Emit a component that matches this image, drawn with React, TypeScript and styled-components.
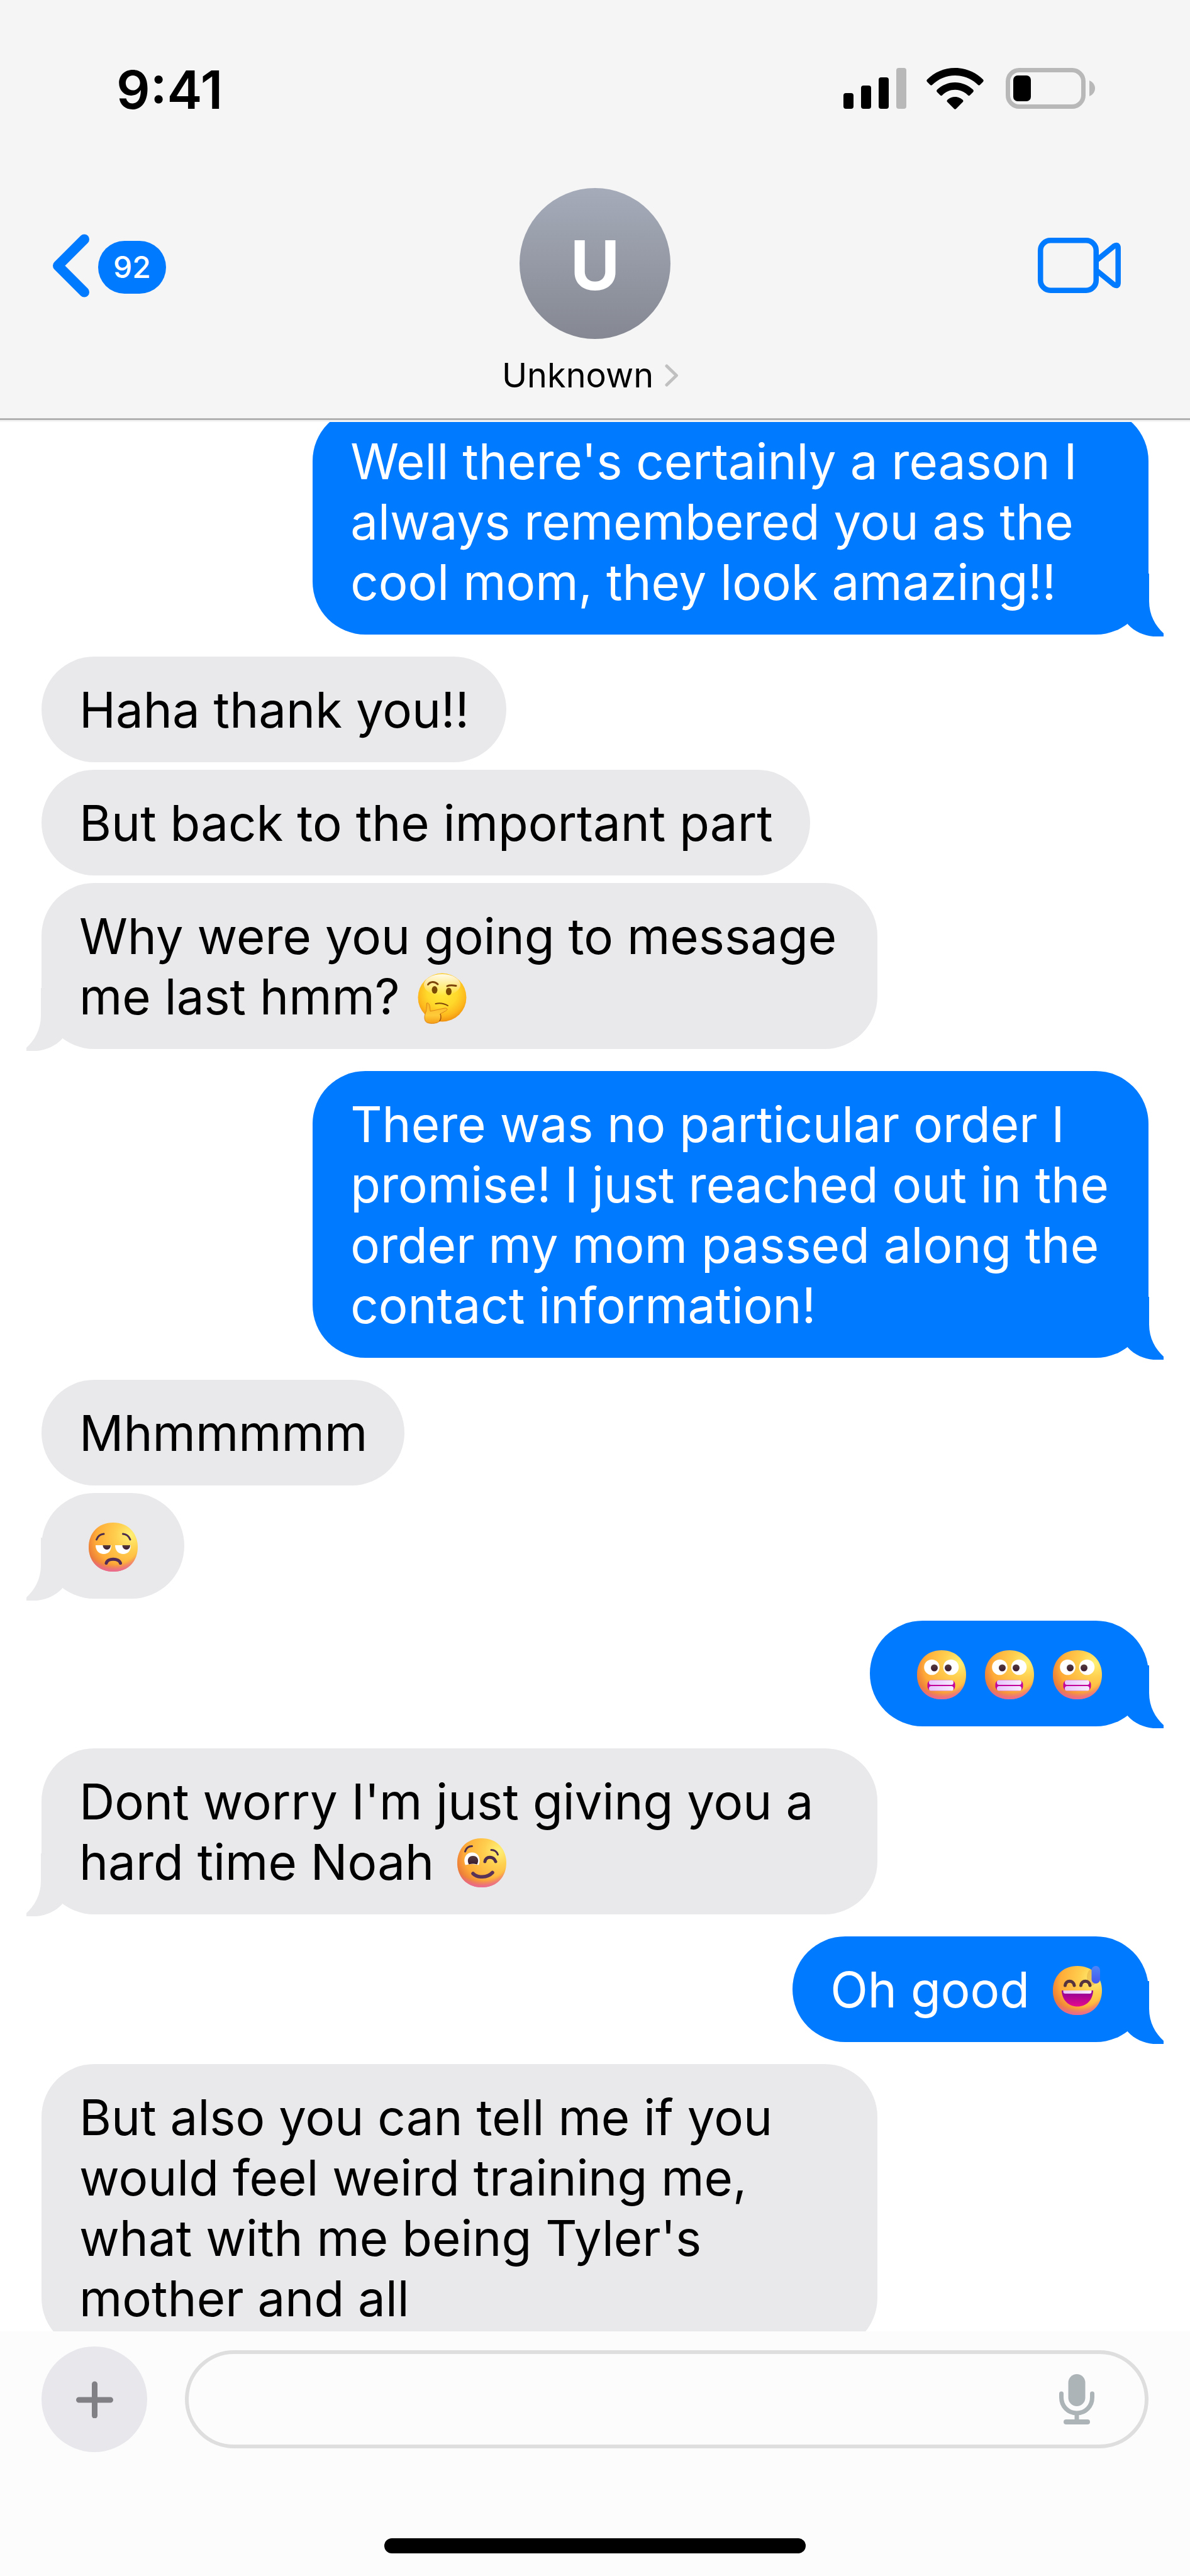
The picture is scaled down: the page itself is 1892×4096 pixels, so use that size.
import React from "react";
import styled, { createGlobalStyle } from "styled-components";

const BLUE = "#007aff";
const GRAY = "#e9e9eb";

const GlobalStyle = createGlobalStyle`
  *, *::before, *::after { box-sizing: border-box; }
  html, body { margin: 0; padding: 0; background: #ffffff; }
  body { font-family: Inter, "Liberation Sans", sans-serif; color: #000000; }
  button { border: 0; padding: 0; background: none; font: inherit; color: inherit; cursor: pointer; }
  svg { display: block; }
`;

const Phone = styled.div`
  display: flex;
  flex-direction: column;
  height: 100vh;
  overflow: hidden;
  background: #ffffff;
`;

/* ---------- header ---------- */

const Header = styled.header`
  flex: none;
  background: #f5f5f5;
  border-bottom: 3px solid #b1b1b1;
  padding-bottom: 36px;
`;

const StatusBar = styled.div`
  display: flex;
  justify-content: space-between;
  align-items: flex-start;
  padding: 108px 151px 0 185px;
`;

const Clock = styled.time`
  font-size: 84px;
  line-height: 70px;
  font-weight: 600;
`;

const StatusIcons = styled.div`
  display: flex;
  gap: 32px;
`;

const Nav = styled.nav`
  display: grid;
  grid-template-columns: 1fr auto 1fr;
  align-items: start;
  height: 330px;
  padding: 0 110px 0 82px;
  margin-top: 121px;
`;

const NavSide = styled.div<{ $end?: boolean }>`
  display: flex;
  align-items: center;
  justify-content: ${(p) => (p.$end ? "flex-end" : "flex-start")};
  height: 246px;
`;

const BackButton = styled.button`
  display: flex;
  align-items: center;
  gap: 14px;
`;

const Badge = styled.span`
  height: 84px;
  margin-top: 6px;
  padding: 0 24px;
  border-radius: 42px;
  background: ${BLUE};
  color: #ffffff;
  font-size: 48px;
  line-height: 84px;
  font-weight: 500;
`;

const Contact = styled.button`
  display: flex;
  flex-direction: column;
  align-items: center;
  gap: 26px;
  margin-left: 28px;
`;

const Avatar = styled.span`
  display: grid;
  place-items: center;
  width: 240px;
  height: 240px;
  padding-top: 6px;
  border-radius: 50%;
  background: linear-gradient(#a5abb9, #858892);
  color: #ffffff;
  font-size: 108px;
  line-height: 132px;
  font-weight: 700;
`;

const ContactName = styled.span`
  display: flex;
  align-items: center;
  gap: 18px;
  padding-right: 15px;
  font-size: 54px;
  line-height: 64px;
`;

/* ---------- conversation ---------- */

const Conversation = styled.main`
  flex: 1;
  min-height: 0;
  overflow: hidden;
  border-top: 3px solid #f5f5f5;
`;

const Thread = styled.ul`
  display: flex;
  flex-direction: column;
  list-style: none;
  margin: -22px 0 0;
  padding: 0 66px;
`;

const Bubble = styled.li<{ $mine: boolean; $first: boolean }>`
  position: relative;
  align-self: ${(p) => (p.$mine ? "flex-end" : "flex-start")};
  max-width: 75.5%;
  margin-top: ${(p) => (p.$first ? "35px" : "12px")};
  padding: 37px 59px 35px 60px;
  border-radius: 84px;
  background: ${(p) => (p.$mine ? BLUE : GRAY)};
  color: ${(p) => (p.$mine ? "#ffffff" : "#000000")};
  font-size: 78px;
  line-height: 96px;

  &:first-child { margin-top: 0; }
`;

const TailShape = styled.svg<{ $mine: boolean }>`
  position: absolute;
  bottom: -3px;
  ${(p) => (p.$mine ? "right: -24px;" : "left: -24px; transform: scaleX(-1);")}
  fill: ${(p) => (p.$mine ? BLUE : GRAY)};
`;

const EmojiImage = styled.svg<{ $tight?: boolean }>`
  display: inline-block;
  overflow: visible;
  margin: 0 ${(p) => (p.$tight ? "6px" : "15px")};
  vertical-align: -12px;
`;

/* ---------- composer ---------- */

const Composer = styled.footer`
  flex: none;
  padding: 24px 66px 36px;
  background: #fcfcfc;
`;

const ComposerRow = styled.form`
  display: flex;
  align-items: center;
  gap: 60px;
`;

const PlusButton = styled.button`
  display: grid;
  place-items: center;
  flex: none;
  width: 168px;
  height: 168px;
  border-radius: 50%;
  background: #e8e7ec;
`;

const Field = styled.div`
  display: flex;
  align-items: center;
  flex: 1;
  height: 156px;
  padding: 0 80px 0 54px;
  border: 6px solid #dedede;
  border-radius: 78px;
`;

const TextInput = styled.input`
  flex: 1;
  min-width: 0;
  border: 0;
  outline: 0;
  background: transparent;
  font: inherit;
  font-size: 78px;
  line-height: 96px;
`;

const HomeIndicator = styled.div`
  width: 670px;
  max-width: 60%;
  height: 24px;
  margin: 137px auto 0;
  border-radius: 12px;
  background: #000000;
`;

/* ---------- icons ---------- */

const SignalIcon = () => (
  <svg width="100" height="65" viewBox="0 0 100 65" aria-hidden="true">
    <rect x="0" y="40" width="16" height="25" rx="4" />
    <rect x="28" y="28" width="16" height="37" rx="4" />
    <rect x="56" y="15" width="16" height="50" rx="4" />
    <rect x="84" y="0" width="16" height="65" rx="4" fill="#b8b8b8" />
  </svg>
);

const WifiIcon = () => (
  <svg width="94" height="66" viewBox="0 0 94 66" aria-hidden="true">
    <path d="M45.500 0C63 0 78.500 7 90 18.500Q91.500 20.300 90 22L85 27Q83.500 28.500 82 27C72 17.500 59.500 12 45.500 12S19 17.500 9 27Q7.500 28.500 6 27L1 22Q-.5 20.300 1 18.500C12.500 7 28 0 45.500 0Z" />
    <path d="M45.500 23C56.500 23 66.500 27.500 74 34.500Q75.800 36.500 74 38.500L69 43.500Q67.500 45 66 43.500C60.500 38 53.500 34.800 45.500 34.800S30.500 38 25 43.500Q23.500 45 22 43.500L17 38.500Q15.200 36.500 17 34.500C24.500 27.500 34.500 23 45.500 23Z" />
    <path d="M45.500 46C50 46 54.500 48 57.700 50.700Q59.300 52.500 57.700 54.300L47 65Q45.500 66.500 44 65L33.300 54.300Q31.700 52.500 33.300 50.700C36.500 48 41 46 45.500 46Z" />
  </svg>
);

const BatteryIcon = () => (
  <svg width="142" height="65" viewBox="0 0 142 65" aria-hidden="true">
    <rect x="3.500" y="3.500" width="120" height="58" rx="18" fill="none" stroke="#b8b8b8" strokeWidth="7" />
    <rect x="12" y="12" width="28" height="41" rx="7" />
    <path d="M133 20C138.500 22 142 27 142 32.500S138.500 43 133 45Z" fill="#b8b8b8" />
  </svg>
);

const BackIcon = () => (
  <svg width="60" height="101" viewBox="0 0 60 101" fill="none" stroke={BLUE} strokeWidth="16" strokeLinecap="round" strokeLinejoin="round" aria-hidden="true">
    <path d="M52 8.500 10 50.500 52 92.500" />
  </svg>
);

const VideoIcon = () => (
  <svg width="132" height="88" viewBox="0 0 132 88" fill="none" stroke={BLUE} strokeWidth="8.500" aria-hidden="true">
    <rect x="4.250" y="4.250" width="88.500" height="79.500" rx="16" />
    <path d="M94 35.500 121 13.500Q127.700 9.500 127.700 16.500V71.500Q127.700 78.500 121 74.500L94 52.500" />
  </svg>
);

const DetailIcon = () => (
  <svg width="22" height="36" viewBox="0 0 22 36" fill="none" stroke="#c0c0c0" strokeWidth="5" strokeLinecap="round" strokeLinejoin="round" aria-hidden="true">
    <path d="M3 3 18.500 18 3 33" />
  </svg>
);

const PlusIcon = () => (
  <svg width="60" height="60" viewBox="0 0 60 60" stroke="#808085" strokeWidth="9" strokeLinecap="round" aria-hidden="true">
    <path d="M30.500 6V56M5.500 31H55.500" />
  </svg>
);

const MicIcon = () => (
  <svg width="56" height="80" viewBox="0 0 56 80" aria-hidden="true">
    <rect x="14.500" y="0" width="27" height="51" rx="13.500" fill="#adb4b8" />
    <path d="M3.500 31V37C3.500 51 14 62 28 62S52.500 51 52.500 37V31" fill="none" stroke="#adb4b8" strokeWidth="7" strokeLinecap="round" />
    <path d="M28 62V74" stroke="#adb4b8" strokeWidth="7" />
    <rect x="7" y="72" width="42" height="8" rx="4" fill="#adb4b8" />
  </svg>
);

const Tail = ({ mine }: { mine: boolean }) => (
  <TailShape $mine={mine} width="60" height="100" viewBox="0 0 60 100" aria-hidden="true">
    <path d="M37 0V44C37 66 47 83 60 95V100C40 102 18 97 3 80.500V0Z" />
  </TailShape>
);

/* ---------- emoji ---------- */

const FACE = "M39 0C63 0 78 17 78 39S63 78 39 78 0 61 0 39 15 0 39 0Z";

const PaintDefs = styled.svg`
  position: absolute;
`;

const EmojiPaints = () => (
  <PaintDefs width="0" height="0" aria-hidden="true">
    <defs>
      <radialGradient id="skin" gradientUnits="userSpaceOnUse" cx="66" cy="20" r="72">
        <stop offset="0" stopColor="#fff176" />
        <stop offset="0.320" stopColor="#ffcf4f" />
        <stop offset="0.700" stopColor="#ffb03a" />
        <stop offset="1" stopColor="#fb9a33" />
      </radialGradient>
      <radialGradient id="shade" gradientUnits="userSpaceOnUse" cx="46" cy="28" r="58">
        <stop offset="0.600" stopColor="#e0653f" stopOpacity="0" />
        <stop offset="1" stopColor="#d9603f" stopOpacity="0.850" />
      </radialGradient>
      <radialGradient id="chin" gradientUnits="userSpaceOnUse" cx="39" cy="16" r="64">
        <stop offset="0.800" stopColor="#ea62b0" stopOpacity="0" />
        <stop offset="1" stopColor="#ea62b0" stopOpacity="0.950" />
      </radialGradient>
      <linearGradient id="eye" x1="0" y1="0" x2="0" y2="1">
        <stop offset="0" stopColor="#553b3e" />
        <stop offset="1" stopColor="#3a1b30" />
      </linearGradient>
      <linearGradient id="teeth" x1="0" y1="0" x2="1" y2="0">
        <stop offset="0" stopColor="#e6c3fb" />
        <stop offset="1" stopColor="#f6ecff" />
      </linearGradient>
      <linearGradient id="laugh" x1="0" y1="0" x2="0" y2="1">
        <stop offset="0" stopColor="#8a0196" />
        <stop offset="1" stopColor="#e50a8e" />
      </linearGradient>
      <linearGradient id="drop" x1="0" y1="0" x2="0" y2="1">
        <stop offset="0" stopColor="#4f86f7" />
        <stop offset="1" stopColor="#4456ee" />
      </linearGradient>
      <radialGradient id="ponder" gradientUnits="userSpaceOnUse" cx="39" cy="30" r="48">
        <stop offset="0" stopColor="#ffe93c" />
        <stop offset="0.500" stopColor="#ffd92b" />
        <stop offset="0.800" stopColor="#fdb71c" />
        <stop offset="1" stopColor="#ef9010" />
      </radialGradient>
      <linearGradient id="gloss" x1="0" y1="0" x2="0" y2="1">
        <stop offset="0" stopColor="#ffffff" stopOpacity="0.900" />
        <stop offset="1" stopColor="#ffffff" stopOpacity="0" />
      </linearGradient>
      <linearGradient id="hand" x1="0" y1="0" x2="0" y2="1">
        <stop offset="0" stopColor="#f9b423" />
        <stop offset="0.600" stopColor="#ffcb3a" />
        <stop offset="1" stopColor="#f59e17" />
      </linearGradient>
    </defs>
  </PaintDefs>
);

const Skin = () => (
  <g>
    <path d={FACE} fill="url(#skin)" />
    <path d={FACE} fill="url(#shade)" />
    <path d={FACE} fill="url(#chin)" />
  </g>
);

const emojiBox = { width: 78, height: 78, viewBox: "0 0 78 78", role: "img" };

const SadFace = () => (
  <EmojiImage {...emojiBox} aria-label="Disappointed face">
    <Skin />
    <g fill="none" stroke="#4b2c4c" strokeWidth="3" strokeLinecap="round">
      <path d="M12.500 27C14.500 21.500 18 18.500 24 18" />
      <path d="M54.500 18C60.500 18.500 64 21.500 66 27" />
    </g>
    <g fill="#ffffff">
      <path d="M11 36H36C36 45 31 50 24 50S11 45 11 36Z" />
      <path d="M42 36H67C67 45 62 50 55 50S42 45 42 36Z" />
    </g>
    <g fill="url(#eye)">
      <path d="M22.500 36H35C35 40 32.500 43 29 43S22.500 40 22.500 36Z" />
      <path d="M53.500 36H66C66 40 63.500 43 60 43S53.500 40 53.500 36Z" />
    </g>
    <path d="M28 64.500C30 56 48 56 50.500 64.500" fill="none" stroke="#512b56" strokeWidth="5" strokeLinecap="round" />
  </EmojiImage>
);

const GrimaceFace = () => (
  <EmojiImage {...emojiBox} aria-label="Grimacing face">
    <Skin />
    <ellipse cx="23.500" cy="27" rx="12.300" ry="12.300" fill="#ffffff" />
    <ellipse cx="54" cy="27" rx="12.300" ry="12.300" fill="#ffffff" />
    <circle cx="27.500" cy="28" r="5.500" fill="url(#eye)" />
    <circle cx="49.500" cy="28" r="5.500" fill="url(#eye)" />
    <rect x="16.500" y="47.500" width="44" height="17" rx="7" fill="#c4009a" />
    <rect x="19" y="47.500" width="39" height="7.500" rx="3.500" fill="url(#teeth)" />
    <rect x="19" y="57" width="39" height="7.500" rx="3.500" fill="url(#teeth)" />
  </EmojiImage>
);

const WinkFace = () => (
  <EmojiImage {...emojiBox} aria-label="Winking face">
    <Skin />
    <g fill="none" stroke="#4b2c4c" strokeLinecap="round">
      <path d="M12.500 21C14 16 18 12.500 23.500 12.500" strokeWidth="3" />
      <path d="M54 18.500C59.500 18.500 63 21.500 64.500 26" strokeWidth="3" />
    </g>
    <path d="M13 42.500C8.500 33 13.500 22.500 23.500 22.500S38.500 33 34 42.500Q23.500 39.500 13 42.500Z" fill="#ffffff" />
    <path d="M18.500 41.500C14.500 34 18 28 25 28S35.500 34 31.500 41.500Q25 39.500 18.500 41.500Z" fill="url(#eye)" />
    <path d="M44 37C45 28 58 28 61 37" fill="none" stroke="#4b2c4c" strokeWidth="5" strokeLinecap="round" />
    <path d="M25 56C32 63.500 48 63 56 54.500" fill="none" stroke="#5a3358" strokeWidth="5.500" strokeLinecap="round" />
  </EmojiImage>
);

const SweatFace = () => (
  <EmojiImage {...emojiBox} aria-label="Grinning face with sweat">
    <Skin />
    <ellipse cx="62" cy="18" rx="8" ry="13" fill="#d08a30" opacity="0.350" />
    <g fill="none" stroke="#55343f" strokeWidth="5" strokeLinecap="round">
      <path d="M19.500 31C20.500 22 32.500 22 34 31" />
      <path d="M44.500 31C45.500 22 57.500 22 59 31" />
    </g>
    <path d="M14 39H64C63.500 54.500 53 64.500 39 64.500S14.500 54.500 14 39Z" fill="url(#laugh)" />
    <path d="M16.500 39H61.500V41Q61.500 44 58.500 44H19.500Q16.500 44 16.500 41Z" fill="url(#teeth)" />
    <rect x="61.500" y="0" width="13.500" height="28" rx="6.700" fill="url(#drop)" />
  </EmojiImage>
);

const ThinkingFace = () => (
  <EmojiImage {...emojiBox} $tight aria-label="Thinking face">
    <circle cx="39" cy="39" r="38.500" fill="url(#ponder)" />
    <ellipse cx="39" cy="19" rx="29" ry="17" fill="url(#gloss)" />
    <g fill="none" stroke="#7d4509" strokeWidth="3" strokeLinecap="round">
      <path d="M16.500 18.500C20 13.500 27 13 32 18" />
      <path d="M47 21C51 19 56 19.500 61 20.500" />
      <path d="M28.500 49C35 47.500 42 48.500 48 52" strokeWidth="2" />
    </g>
    <ellipse cx="27" cy="27" rx="4.500" ry="6" fill="#7a4a05" />
    <ellipse cx="49.500" cy="29.500" rx="4.500" ry="6" fill="#7a4a05" />
    <path d="M14.500 48C17 47 19 50 19.500 54L20 61 43 56C48 55.500 48 59 44.500 60.500L36 65C37.500 69 37 74 34.500 77 31 81 16 82 12.500 77 9.500 71 11.500 66 13.500 61Z" fill="url(#hand)" stroke="#dd8516" strokeWidth="1" />
    <path d="M36 65C37.500 69 37 74 34.500 77" fill="none" stroke="#a85a10" strokeWidth="1.500" />
  </EmojiImage>
);

/* ---------- data ---------- */

interface Message {
  mine: boolean;
  tail?: boolean;
  body: React.ReactNode;
}

const messages: Message[] = [
  { mine: true, tail: true, body: "Well there's certainly a reason I always remembered you as the cool mom, they look amazing!!" },
  { mine: false, body: "Haha thank you!!" },
  { mine: false, body: "But back to the important part" },
  { mine: false, tail: true, body: <>Why were you going to message me last hmm? <ThinkingFace /></> },
  { mine: true, tail: true, body: "There was no particular order I promise! I just reached out in the order my mom passed along the contact information!" },
  { mine: false, body: "Mhmmmmm" },
  { mine: false, tail: true, body: <SadFace /> },
  { mine: true, tail: true, body: <><GrimaceFace /><GrimaceFace /><GrimaceFace /></> },
  { mine: false, tail: true, body: <>Dont worry I'm just giving you a hard time Noah <WinkFace /></> },
  { mine: true, tail: true, body: <>Oh good <SweatFace /></> },
  { mine: false, body: "But also you can tell me if you would feel weird training me, what with me being Tyler's mother and all" },
];

export default function App() {
  return (
    <Phone>
      <GlobalStyle />
      <EmojiPaints />
      <Header>
        <StatusBar>
          <Clock>9:41</Clock>
          <StatusIcons>
            <SignalIcon />
            <WifiIcon />
            <BatteryIcon />
          </StatusIcons>
        </StatusBar>
        <Nav>
          <NavSide>
            <BackButton type="button" aria-label="Back, 92 unread">
              <BackIcon />
              <Badge>92</Badge>
            </BackButton>
          </NavSide>
          <Contact type="button">
            <Avatar>U</Avatar>
            <ContactName>
              Unknown
              <DetailIcon />
            </ContactName>
          </Contact>
          <NavSide $end>
            <button type="button" aria-label="Video call">
              <VideoIcon />
            </button>
          </NavSide>
        </Nav>
      </Header>
      <Conversation>
        <Thread>
          {messages.map((m, i) => (
            <Bubble key={i} $mine={m.mine} $first={i === 0 || messages[i - 1].mine !== m.mine}>
              {m.body}
              {m.tail && <Tail mine={m.mine} />}
            </Bubble>
          ))}
        </Thread>
      </Conversation>
      <Composer>
        <ComposerRow onSubmit={(e) => e.preventDefault()}>
          <PlusButton type="button" aria-label="Add attachment">
            <PlusIcon />
          </PlusButton>
          <Field>
            <TextInput type="text" aria-label="Message" />
            <button type="button" aria-label="Dictate">
              <MicIcon />
            </button>
          </Field>
        </ComposerRow>
        <HomeIndicator />
      </Composer>
    </Phone>
  );
}
